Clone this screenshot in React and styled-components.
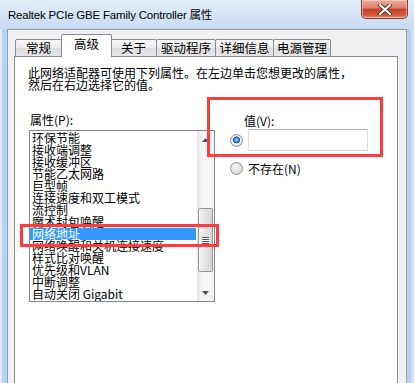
import React from 'react'
import styled, { createGlobalStyle } from 'styled-components'

const GlobalStyle = createGlobalStyle`
  html, body {
    margin: 0;
    padding: 0;
    background: #fff;
  }
  body {
    width: 414px;
    height: 383px;
    overflow: hidden;
  }
`

const cjk = `"Noto Sans CJK SC", "Noto Sans", sans-serif`

const tabs = [
  { label: '常规', width: 47 },
  { label: '高级', width: 51, active: true },
  { label: '关于', width: 47 },
  { label: '驱动程序', width: 60 },
  { label: '详细信息', width: 59 },
  { label: '电源管理', width: 58 }
]

const properties = [
  '环保节能',
  '接收端调整',
  '接收缓冲区',
  '节能乙太网路',
  '巨型帧',
  '连接速度和双工模式',
  '流控制',
  '魔术封包唤醒',
  '网络地址',
  '网络唤醒和关机连接速度',
  '样式比对唤醒',
  '优先级和VLAN',
  '中断调整',
  '自动关闭 Gigabit'
]

const App = () => (
  <Window>
    <GlobalStyle />
    <TitleBar>
      <Title>Realtek PCIe GBE Family Controller 属性</Title>
      <CloseButton>
        <svg width="14" height="11" viewBox="0 0 14 11">
          <path d="M2 1 L12 10 M12 1 L2 10" stroke="#5a2a22" strokeWidth="4" strokeLinecap="round" />
          <path d="M2 1 L12 10 M12 1 L2 10" stroke="#fff" strokeWidth="2.2" strokeLinecap="round" />
        </svg>
      </CloseButton>
    </TitleBar>
    <Client>
      <TabRow>
        {tabs.map(t => (
          <Tab key={t.label} $width={t.width} $active={t.active}>{t.label}</Tab>
        ))}
      </TabRow>
      <Panel>
        <Description>
          此网络适配器可使用下列属性。在左边单击您想更改的属性，<br />
          然后在右边选择它的值。
        </Description>
        <Columns>
          <LeftColumn>
            <FieldLabel>属性(P):</FieldLabel>
            <ListBox>
              <Items>
                {properties.map(p => (
                  <Item key={p} $selected={p === '网络地址'}>{p}</Item>
                ))}
              </Items>
              <ScrollBar>
                <ArrowButton>
                  <svg width="7" height="4" viewBox="0 0 7 4"><path d="M0 4 L3.5 0 L7 4 Z" fill="#505050" /></svg>
                </ArrowButton>
                <Track>
                  <Thumb>
                    <Grip />
                    <Grip />
                    <Grip />
                    <Grip />
                  </Thumb>
                </Track>
                <ArrowButton>
                  <svg width="7" height="4" viewBox="0 0 7 4"><path d="M0 0 L7 0 L3.5 4 Z" fill="#505050" /></svg>
                </ArrowButton>
              </ScrollBar>
            </ListBox>
          </LeftColumn>
          <RightColumn>
            <ValueLabel>值(V):</ValueLabel>
            <OptionRow>
              <Radio $checked />
              <TextInput />
            </OptionRow>
            <OptionRow $spaced>
              <Radio />
              <OptionText>不存在(N)</OptionText>
            </OptionRow>
          </RightColumn>
        </Columns>
      </Panel>
    </Client>
    <Highlight style={{ left: 207, top: 97, width: 176, height: 60 }} />
    <Highlight style={{ left: 20, top: 224, width: 199, height: 23 }} />
  </Window>
)

const Window = styled.div`
  position: relative;
  width: 414px;
  height: 383px;
  box-sizing: border-box;
  display: flex;
  flex-direction: column;
  padding: 0 7px;
  background: #b9d2f0;
  box-shadow: inset 2px 0 #e2ecf9, inset -3px 0 #cfe0f5;
  overflow: hidden;
`
const TitleBar = styled.div`
  height: 29px;
  margin: 0 -7px;
  padding-left: 8px;
  display: flex;
  align-items: flex-start;
  background: linear-gradient(#e3edf9, #d3e3f6 60%, #c6daf2);
`
const Title = styled.div`
  margin-top: 6px;
  font-family: "Liberation Sans", ${cjk};
  font-size: 11.5px;
  letter-spacing: -0.2px;
  line-height: 18px;
  color: #000;
`
const CloseButton = styled.div`
  margin-left: auto;
  margin-right: 6px;
  width: 47px;
  height: 19px;
  box-sizing: border-box;
  display: flex;
  align-items: center;
  justify-content: center;
  border: 1px solid #8a3b2e;
  border-top: none;
  border-radius: 0 0 5px 5px;
  background: linear-gradient(#eab0a3, #d9816c 45%, #c6412a 50%, #d2583e 85%, #e09a7c);
  box-shadow: inset 0 0 0 1px rgba(255, 220, 210, 0.5);
`
const Client = styled.div`
  flex: 1;
  display: flex;
  flex-direction: column;
  box-sizing: border-box;
  border: 1px solid #8c9cb0;
  border-bottom: none;
  background: #f0f0f0;
  padding: 5px 8px 0 6px;
`
const TabRow = styled.div`
  position: relative;
  z-index: 1;
  display: flex;
  align-items: flex-end;
  height: 22px;
  padding-left: 2px;
  margin-bottom: -1px;
`
const Tab = styled.div`
  width: ${p => p.$width}px;
  height: ${p => (p.$active ? 23 : 18)}px;
  margin-left: -1px;
  margin-right: ${p => (p.$active ? -1 : 0)}px;
  position: relative;
  z-index: ${p => (p.$active ? 2 : 1)};
  box-sizing: border-box;
  border: 1px solid #898c95;
  border-bottom: ${p => (p.$active ? 'none' : '1px solid #898c95')};
  border-radius: 2px 2px 0 0;
  background: ${p => (p.$active ? '#fff' : 'linear-gradient(#f7f7f7, #ececec 50%, #dedede 51%, #e6e6e6)')};
  font-family: ${cjk};
  font-size: 12.5px;
  line-height: ${p => (p.$active ? 17 : 16)}px;
  text-align: center;
  color: #000;
`
const Panel = styled.div`
  flex: 1;
  box-sizing: border-box;
  background: #fff;
  border: 1px solid #898c95;
  border-bottom: none;
  padding: 10px 0 0 13px;
  font-family: ${cjk};
  font-size: 12px;
  color: #000;
`
const Description = styled.p`
  margin: 0;
  line-height: 12px;
  white-space: nowrap;
`
const Columns = styled.div`
  display: flex;
  margin-top: 23px;
`
const LeftColumn = styled.div`
  width: 186px;
  margin-left: 1px;
  display: flex;
  flex-direction: column;
`
const FieldLabel = styled.div`
  line-height: 12px;
  padding-left: 1px;
  margin-bottom: 4px;
`
const ListBox = styled.div`
  height: 172px;
  box-sizing: border-box;
  border: 1px solid #828790;
  display: flex;
`
const Items = styled.div`
  flex: 1;
  padding-top: 1px;
  padding-right: 1px;
  overflow: hidden;
`
const Item = styled.div`
  height: 12px;
  line-height: 12px;
  padding-left: 2px;
  white-space: nowrap;
  background: ${p => (p.$selected ? '#3399ff' : 'transparent')};
  color: ${p => (p.$selected ? '#fff' : '#000')};
`
const ScrollBar = styled.div`
  width: 17px;
  display: flex;
  flex-direction: column;
  background: linear-gradient(to right, #e6e6e6, #f5f5f5 30%, #f5f5f5);
`
const ArrowButton = styled.div`
  height: 17px;
  display: flex;
  align-items: center;
  justify-content: center;
`
const Track = styled.div`
  flex: 1;
  display: flex;
  flex-direction: column;
`
const Thumb = styled.div`
  margin-top: 60px;
  height: 64px;
  margin-left: 1px;
  width: 15px;
  box-sizing: border-box;
  border: 1px solid #979797;
  border-radius: 2px;
  background: linear-gradient(to right, #f3f3f3, #e4e4e4 50%, #d5d5d5);
  display: flex;
  flex-direction: column;
  align-items: center;
  justify-content: center;
  gap: 1px;
`
const Grip = styled.div`
  width: 7px;
  height: 1px;
  background: #555;
  box-shadow: 0 1px #fff;
`
const RightColumn = styled.div`
  margin-left: 15px;
  display: flex;
  flex-direction: column;
`
const ValueLabel = styled.div`
  line-height: 12px;
  margin-top: 1px;
  padding-left: 14px;
`
const OptionRow = styled.div`
  display: flex;
  align-items: center;
  gap: 5px;
  margin-top: ${p => (p.$spaced ? 11 : 2)}px;
`
const Radio = styled.div`
  width: 13px;
  height: 13px;
  box-sizing: border-box;
  border-radius: 50%;
  border: 1px solid #8e8f8f;
  background: ${p =>
    p.$checked
      ? 'radial-gradient(circle at 50% 45%, #cfe8ff 0, #3f8ed9 22%, #1a56a3 40%, #eef1f4 46%, #d6d9dc 100%)'
      : 'radial-gradient(circle at 40% 35%, #fafafa, #d8d8d8 70%, #c8c8c8)'};
`
const TextInput = styled.div`
  width: 120px;
  height: 22px;
  box-sizing: border-box;
  border: 1px solid #dbdfe6;
  border-top-color: #abadb3;
  background: #fff;
`
const OptionText = styled.div`
  line-height: 12px;
`
const Highlight = styled.div`
  position: absolute;
  box-sizing: border-box;
  border: 3px solid #ff3b3b;
  pointer-events: none;
`

export default App
